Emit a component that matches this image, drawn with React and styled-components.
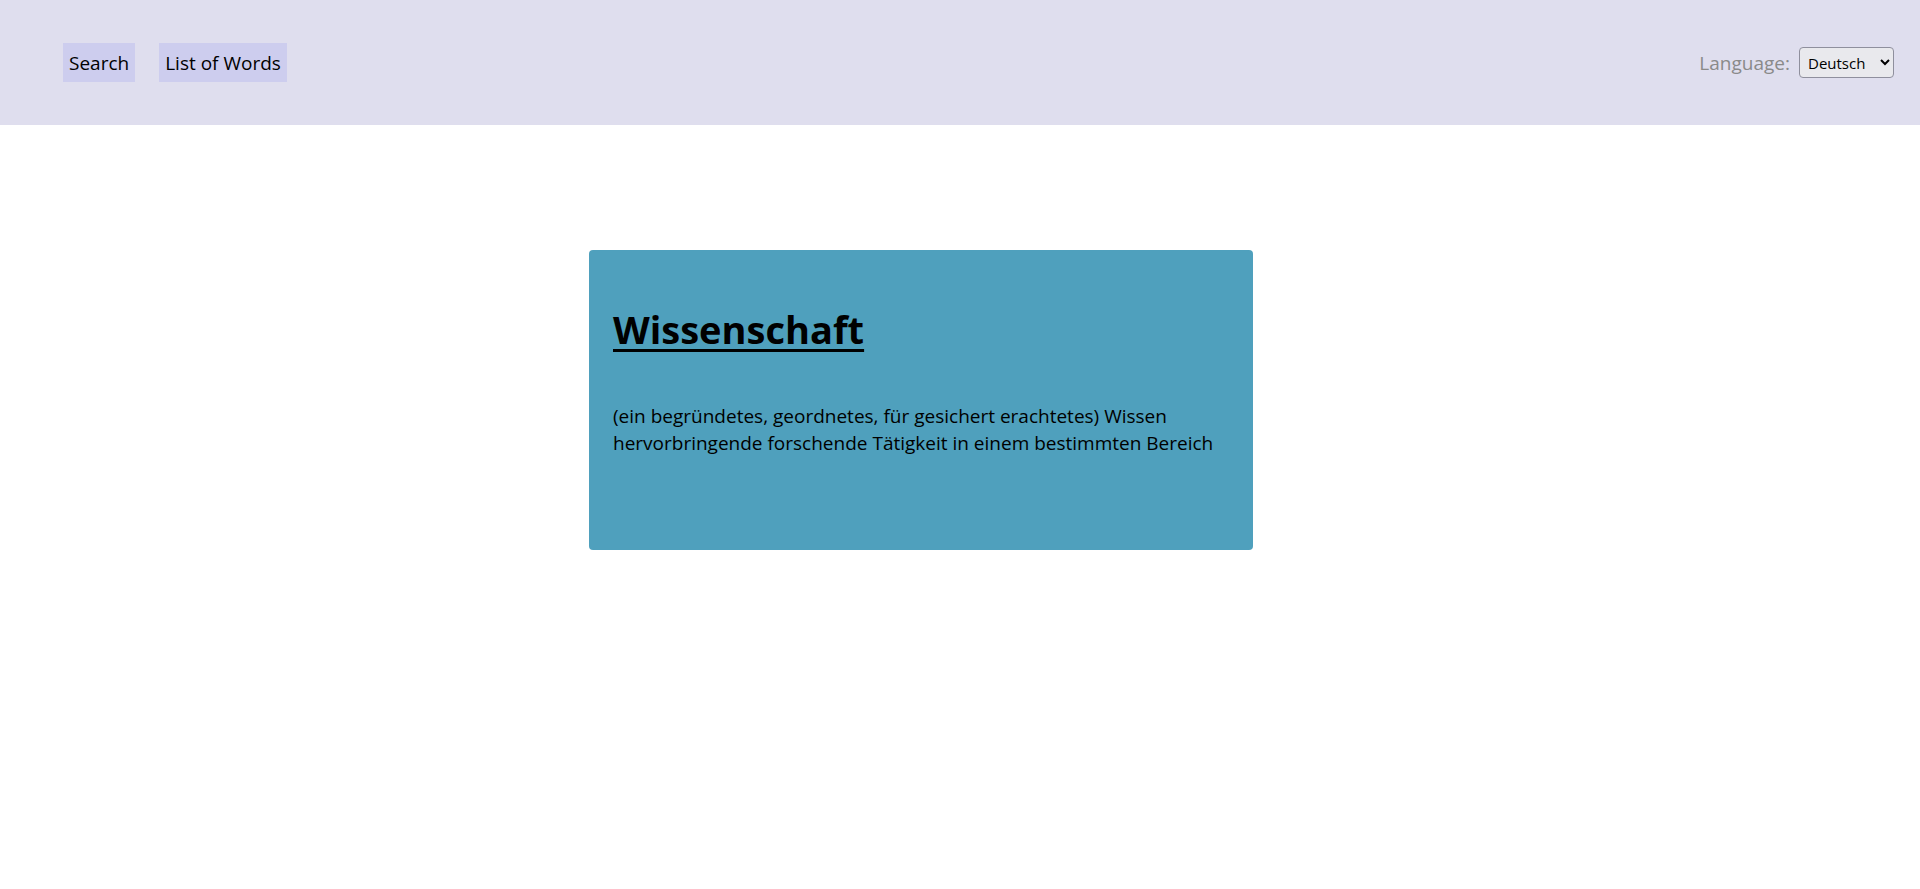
import React, { useState } from "react";
import styled, { createGlobalStyle } from "styled-components";

const GlobalStyle = createGlobalStyle`
  body {
    margin: 0;
    background: #ffffff;
    font-family: "Segoe UI", "Open Sans", sans-serif;
  }
`;

const Header = styled.header`
  height: 125px;
  background: #dfdeee;
  display: flex;
  align-items: center;
  justify-content: space-between;
  padding: 0 26px 0 63px;
  box-sizing: border-box;
`;

const Nav = styled.nav`
  display: flex;
  gap: 24px;
`;

const NavItem = styled.a`
  display: flex;
  align-items: center;
  height: 39px;
  padding: 0 6px;
  background: #cdcdee;
  color: #000;
  font-size: 19px;
  text-decoration: none;
  cursor: pointer;
`;

const LangWrapper = styled.div`
  display: flex;
  align-items: center;
  gap: 9px;
`;

const LangLabel = styled.span`
  color: #8a8a8a;
  font-size: 19px;
`;

const LangSelect = styled.select`
  height: 31px;
  width: 95px;
  font-family: "Segoe UI", "Open Sans", sans-serif;
  font-size: 15px;
  color: #000;
  background: #e9e9ed;
  border: 1px solid #8f8f9d;
  border-radius: 4px;
  padding: 0 4px;
`;

const Main = styled.main`
  padding: 125px 0 0 589px;
`;

const Card = styled.section`
  width: 664px;
  height: 300px;
  box-sizing: border-box;
  background: #4fa0bd;
  border-radius: 4px;
  padding: 53px 24px 0;
`;

const WordTitle = styled.h1`
  margin: 0;
  font-size: 38px;
  font-weight: 700;
  text-decoration: underline;
  text-decoration-thickness: 3px;
  text-underline-offset: 5px;
  color: #000;
`;

const Definition = styled.p`
  margin: 48px 0 0;
  font-size: 19px;
  line-height: 27px;
  color: #000;
`;

export default function App() {
  const [lang, setLang] = useState("de");

  return (
    <>
      <GlobalStyle />
      <Header>
        <Nav>
          <NavItem>Search</NavItem>
          <NavItem>List of Words</NavItem>
        </Nav>
        <LangWrapper>
          <LangLabel>Language:</LangLabel>
          <LangSelect value={lang} onChange={(e) => setLang(e.target.value)}>
            <option value="de">Deutsch</option>
            <option value="en">English</option>
          </LangSelect>
        </LangWrapper>
      </Header>
      <Main>
        <Card>
          <WordTitle>Wissenschaft</WordTitle>
          <Definition>
            (ein begründetes, geordnetes, für gesichert erachtetes) Wissen
            hervorbringende forschende Tätigkeit in einem bestimmten Bereich
          </Definition>
        </Card>
      </Main>
    </>
  );
}
